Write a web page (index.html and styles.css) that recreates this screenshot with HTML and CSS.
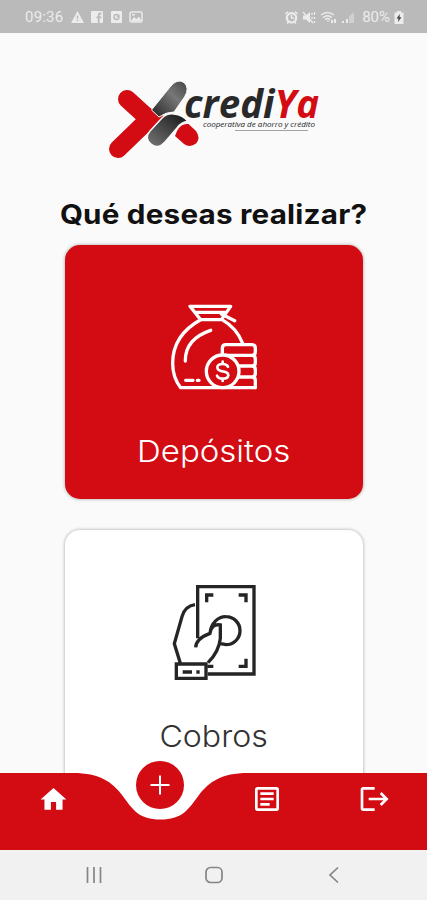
FILE: index.html
```html
<!DOCTYPE html>
<html lang="es">
<head>
  <meta charset="UTF-8">
  <meta name="viewport" content="width=device-width, initial-scale=1.0">
  <title>CrediYa</title>
  <link rel="stylesheet" href="styles.css">
</head>
<body>
  <div class="app">
    <header class="status-bar">
      <div class="status-group">
        <span class="clock">09:36</span>
        <svg width="13" height="12" viewBox="0 0 13 12"><path fill="currentColor" d="M6.500 0L13 12H0z"/><path stroke="#bababa" stroke-width="1.500" d="M6.500 4.500v3M6.500 8.500v1.500"/></svg>
        <svg width="12" height="12" viewBox="0 0 12 12"><rect width="12" height="12" rx="1" fill="currentColor"/><path fill="none" stroke="#bababa" stroke-width="1.800" d="M10.500 2.500H9Q7.700 2.500 7.700 4v8M5.500 6.300h4.800"/></svg>
        <svg width="11" height="12" viewBox="0 0 11 12"><rect width="11" height="12" rx="1" fill="currentColor"/><circle cx="5.500" cy="6" r="2.500" fill="none" stroke="#bababa" stroke-width="1.500"/><path stroke="#bababa" d="M5.500 6l2-1"/></svg>
        <svg width="14" height="12" viewBox="0 0 14 12"><rect x="1" y="1" width="12" height="10" rx="1.500" fill="none" stroke="currentColor" stroke-width="1.500"/><path fill="currentColor" d="M2 10l3-4 2.500 2L10 5.500l2.500 4.500zM3 3h3v1.500H3z"/></svg>
      </div>
      <div class="status-group right">
        <svg width="13" height="13" viewBox="0 0 13 13"><circle cx="6.500" cy="6.800" r="4.700" fill="none" stroke="currentColor" stroke-width="2.200"/><path fill="none" stroke="currentColor" stroke-width="1.500" d="M6.500 4v3H9M.5 3L3 .7M12.500 3L10 .7M2 12.500l1.500-1.500M11 12.500L9.500 11"/></svg>
        <svg width="14" height="13" viewBox="0 0 14 13"><path fill="currentColor" d="M1 4.500h3L8 1v11L4 8.500H1z"/><path fill="none" stroke="currentColor" stroke-width="1.300" d="M1 1l10 11M10 2v2M10 6v2M12.500 1v3M12.500 6v2M12.500 10v2"/></svg>
        <svg width="17" height="13" viewBox="0 0 17 13"><path fill="none" stroke="currentColor" stroke-width="1.500" d="M1 4q6.500-5 13 0M3 6.500q4.500-3.500 9 0M5 8.500q2.500-2 5 0"/><path fill="currentColor" d="M6.500 9.500h3L8 11zM11 9h2v3h-2zM14 8h2v4h-2z"/></svg>
        <svg width="14" height="13" viewBox="0 0 14 13"><path fill="currentColor" d="M1 10h2v2H1zM5 8h2v4H5z"/><path fill="currentColor" opacity=".45" d="M8 5.500L13 1v11H8z"/></svg>
        <span class="battery-text">80%</span>
        <svg width="10" height="13" viewBox="0 0 10 13"><path fill="currentColor" d="M3 0h4v1.500h2.500V13H.5V1.500H3z"/><path fill="#444" d="M5.800 3L2.500 7.500h2L4 11l3.500-4.800h-2z"/></svg>
      </div>
    </header>

    <main class="content">
      <svg class="logo" width="220" height="86" viewBox="105 77 220 86" role="img" aria-label="crediYa cooperativa de ahorro y crédito">
        <defs>
          <linearGradient id="gray-top" x1="0" y1="1" x2="1" y2="0">
            <stop offset="0" stop-color="#222"/>
            <stop offset=".6" stop-color="#777"/>
            <stop offset="1" stop-color="#444"/>
          </linearGradient>
          <linearGradient id="gray-bottom" x1="0" y1="1" x2="1" y2="0">
            <stop offset="0" stop-color="#777"/>
            <stop offset=".6" stop-color="#3c3c3c"/>
            <stop offset="1" stop-color="#111"/>
          </linearGradient>
        </defs>
        <path fill="none" stroke="#d30b13" stroke-width="18" stroke-linecap="round" stroke-linejoin="round" d="M127 99L149 119L118 149"/>
        <path fill="#d30b13" d="M142 106L150 108L164 116L150 131L140 124z"/>
        <path fill="url(#gray-top)" stroke="#fafafa" stroke-width="1" d="M151.500 110L170 87Q177 78 184 82.500Q190 88 184.500 97L174 112Q166 112 159 117z"/>
        <path fill="url(#gray-bottom)" stroke="#fafafa" stroke-width="1.500" d="M150 131L162 118Q167 113 174 114Q183 115 188 121.500Q181 122 177 128L165 142Q158 150 151 144Q144 138 150 131z"/>
        <path fill="#d30b13" d="M177 131Q181 123 188.500 124L196 131Q201 138 196 143.500Q190 148 184 144L175 136z"/>
        <text class="logo-name" x="184" y="117.500" textLength="135" lengthAdjust="spacingAndGlyphs">credi<tspan class="logo-accent">Ya</tspan></text>
        <text class="logo-tagline" x="203" y="127" textLength="112" lengthAdjust="spacingAndGlyphs">cooperativa de ahorro y crédito</text>
        <path stroke="#999" stroke-width=".9" d="M235 130.500h73"/>
      </svg>

      <h1 class="title">Qué deseas realizar?</h1>

      <section class="card card-red">
        <svg class="card-icon" width="110" height="105" viewBox="0 0 330 315" fill="none" stroke="#fff" stroke-width="10" stroke-linejoin="round" stroke-linecap="round">
          <path d="M90 34H212L184 74H122zM107 52H194M184 57L224 77M122 74Q38 120 38 205Q38 248 62 278H285M186 74Q229 98 248 145M152 106Q75 132 76 198"/>
          <path d="M77 256h22M112 256h5"/>
          <path d="M187 181V160Q187 149 198 149H276Q286 149 286 160V170Q286 181 276 181H187M225 181H276Q286 181 286 193V203Q286 213 276 213H238M276 213Q286 213 286 225V235Q286 246 276 246H232M276 246Q286 246 286 257V278"/>
          <circle cx="188" cy="229" r="49" fill="#d30b13"/>
          <path stroke-width="8" d="M204 215Q201 207 188 207Q172 207 172 218Q173 227 188 229Q205 231 205 241Q204 251 188 251Q174 251 171 242M188 200V207M188 251V258"/>
        </svg>
        <h2 class="card-label">Depósitos</h2>
      </section>

      <section class="card card-white">
        <svg class="card-icon" width="110" height="115" viewBox="0 0 330 345" fill="none" stroke="#252525" stroke-width="10">
          <path d="M113 190V35H282V297H143M105 89Q75 93 66 125L43 206L61 265M107 217Q108 191 150 175Q155 145 181 150V190Q177 230 144 263M150 175C153 143 176 124 198 125A42 42 0 0 1 198 209L179 205"/>
          <path d="M140 82V60H160M236 60H258V82M258 251V274H236M142 274H160"/>
          <path d="M49 267H138V310H49zM68 291H96M109 291H119"/>
        </svg>
        <h2 class="card-label">Cobros</h2>
      </section>
    </main>

    <nav class="tab-bar">
      <svg class="tab-shape" width="427" height="77" viewBox="0 0 427 77"><path fill="#d30b13" d="M0 0H73C100 0 112 9 122 22C133 37 139 46.500 160.500 46.500C182 46.500 188 37 199 22C209 9 221 0 248 0H427V77H0z"/></svg>
      <a class="tab"><svg width="31" height="31" viewBox="0 0 24 24"><path fill="#fff" d="M10 20v-6h4v6h5v-8h3L12 3 2 12h3v8z"/></svg></a>
      <a class="tab"><span class="add"><svg width="20" height="20" viewBox="0 0 20 20"><path stroke="#fff" stroke-width="2" d="M10 .5v19M.5 10h19"/></svg></span></a>
      <a class="tab"><svg width="32" height="32" viewBox="0 0 24 24"><path fill="none" stroke="#fff" stroke-width="2" d="M5 4H19Q20 4 20 5V19Q20 20 19 20H5Q4 20 4 19V5Q4 4 5 4zM7 8h10M7 12h10M7 16h7"/></svg></a>
      <a class="tab"><svg width="32" height="32" viewBox="0 0 24 24"><path fill="none" stroke="#fff" stroke-width="2" d="M12.500 4H4Q3 4 3 5V19Q3 20 4 20H12.500M8 12h13M17 7.500L21.500 12L17 16.500"/></svg></a>
    </nav>

    <footer class="system-bar">
      <svg width="20" height="20" viewBox="0 0 20 20"><path stroke="#858585" stroke-width="1.700" d="M3.500 2v16M10 2v16M16.500 2v16"/></svg>
      <svg width="20" height="20" viewBox="0 0 20 20"><rect x="2" y="2.500" width="16" height="15" rx="4.500" fill="none" stroke="#858585" stroke-width="1.700"/></svg>
      <svg width="20" height="20" viewBox="0 0 20 20"><path fill="none" stroke="#858585" stroke-width="1.700" d="M14 2.500L6 10l8 7.500"/></svg>
    </footer>
  </div>
</body>
</html>
```

FILE: styles.css
```css
:root {
  --red: #d30b13;
  --bg: #fafafa;
}
* { box-sizing: border-box; margin: 0; padding: 0; }
body {
  background: var(--bg);
  font-family: Inter, sans-serif;
  overflow: hidden;
}
svg { display: block; flex: none; }
.app {
  position: relative;
  display: flex; flex-direction: column;
  width: 427px; height: 900px;
}

/* Status bar */
.status-bar {
  display: flex; justify-content: space-between; align-items: center;
  flex: none;
  height: 33px;
  padding: 1px 23px 0 25px;
  background: #bababa;
  color: #ececec;
  font: 15px Roboto, sans-serif;
}
.status-group { display: flex; align-items: center; gap: 7.5px; }
.status-group.right { gap: 4px; }
.clock { letter-spacing: 0.2px; }
.battery-text { margin-left: 3px; }

/* Content */
.content {
  display: flex; flex-direction: column; align-items: center;
  flex: 1;
  min-height: 0;
  padding-top: 44px;
  overflow: hidden;
}
.logo { margin-left: 3px; overflow: visible; }
.logo-name {
  font: italic 700 40px "Open Sans", sans-serif;
  fill: #292929;
}
.logo-accent { fill: var(--red); }
.logo-tagline {
  font: italic 400 8px "Open Sans", sans-serif;
  fill: #222;
}
.title {
  flex: none;
  margin-top: 34px;
  height: 48px;
  line-height: 34px;
  font-size: 26.5px;
  font-weight: 700;
  letter-spacing: 0.2px;
  color: #111;
  white-space: nowrap;
  transform: scaleX(1.117);
}
.card {
  display: flex; flex-direction: column; align-items: center;
  flex: none;
  width: 298px; height: 254px;
  margin-bottom: 31px;
  padding-top: 50px;
  background: #fff;
  border-radius: 15px;
  box-shadow: 0 0 3px 1px rgba(0,0,0,0.2);
}
.card-red { background: var(--red); color: #fff; }
.card-white { height: 300px; padding-top: 45px; color: #333; }
.card-icon { margin-left: 2px; }
.card-label {
  margin-top: 31px;
  line-height: 40px;
  font-size: 30px;
  font-weight: 300;
  transform: scaleX(1.1);
}
.card-white .card-label { margin-top: 26px; transform: scaleX(1.07); }

.tab-bar {
  position: absolute; left: 0; bottom: 50px;
  display: grid;
  grid-template-columns: repeat(4, 1fr);
  width: 427px; height: 77px;
}
.tab-shape { position: absolute; top: 0; left: 0; }
.tab {
  position: relative;
  display: flex; justify-content: center; align-items: center;
  height: 52px;
}
.add {
  display: flex; justify-content: center; align-items: center;
  width: 48px; height: 48px;
  margin-top: -28px;
  border-radius: 50%;
  background: var(--red);
}

/* Android buttons */
.system-bar {
  display: flex; justify-content: center; align-items: center; gap: 100px;
  flex: none;
  height: 50px;
  background: #f1f1f1;
}
```
